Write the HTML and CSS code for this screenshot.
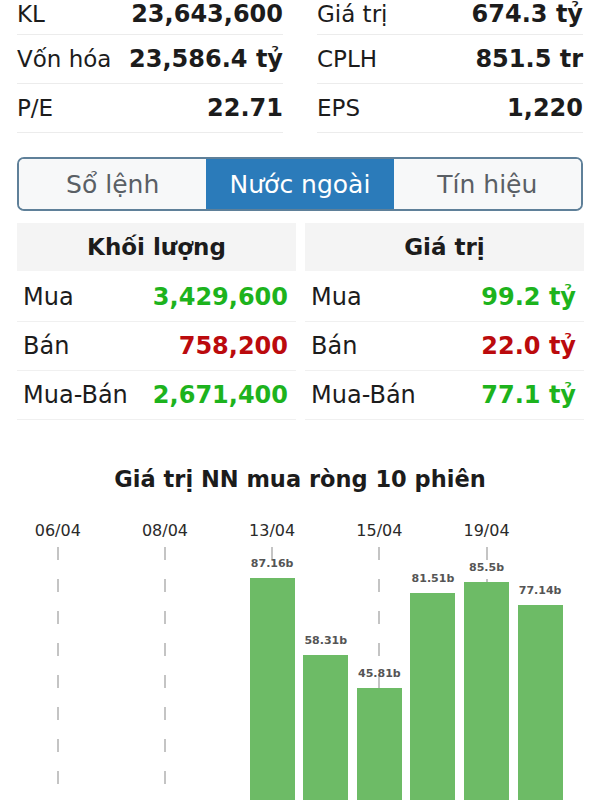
FILE: index.html
```html
<!DOCTYPE html>
<html lang="vi">
<head>
    <meta charset="UTF-8">
    <meta name="viewport" content="width=device-width, initial-scale=1.0">
    <title>Nước ngoài</title>
    <link rel="stylesheet" href="styles.css">
</head>
<body>
    <div class="stats">
        <div class="stat-col">
            <div class="stat-row"><span class="stat-label">KL</span><span class="stat-value">23,643,600</span></div>
            <div class="stat-row"><span class="stat-label">Vốn hóa</span><span class="stat-value">23,586.4 tỷ</span></div>
            <div class="stat-row"><span class="stat-label">P/E</span><span class="stat-value">22.71</span></div>
        </div>
        <div class="stat-col">
            <div class="stat-row"><span class="stat-label">Giá trị</span><span class="stat-value">674.3 tỷ</span></div>
            <div class="stat-row"><span class="stat-label">CPLH</span><span class="stat-value">851.5 tr</span></div>
            <div class="stat-row"><span class="stat-label">EPS</span><span class="stat-value">1,220</span></div>
        </div>
    </div>

    <div class="tabs">
        <div class="tab">Sổ lệnh</div>
        <div class="tab active">Nước ngoài</div>
        <div class="tab">Tín hiệu</div>
    </div>

    <div class="foreign">
        <div class="foreign-col">
            <div class="foreign-head">Khối lượng</div>
            <div class="foreign-row"><span>Mua</span><span class="num up">3,429,600</span></div>
            <div class="foreign-row"><span>Bán</span><span class="num down">758,200</span></div>
            <div class="foreign-row"><span>Mua-Bán</span><span class="num up">2,671,400</span></div>
        </div>
        <div class="foreign-col">
            <div class="foreign-head">Giá trị</div>
            <div class="foreign-row"><span>Mua</span><span class="num up">99.2 tỷ</span></div>
            <div class="foreign-row"><span>Bán</span><span class="num down">22.0 tỷ</span></div>
            <div class="foreign-row"><span>Mua-Bán</span><span class="num up">77.1 tỷ</span></div>
        </div>
    </div>

    <h2 class="chart-title">Giá trị NN mua ròng 10 phiên</h2>
    <div class="chart">
        <div class="slot tick"><div class="date">06/04</div><div class="plot"></div></div>
        <div class="slot"><div class="date"></div><div class="plot"></div></div>
        <div class="slot tick"><div class="date">08/04</div><div class="plot"></div></div>
        <div class="slot"><div class="date"></div><div class="plot"></div></div>
        <div class="slot tick">
            <div class="date">13/04</div>
            <div class="plot"><div class="bar-col"><span class="bar-val">87.16b</span><div class="bar" style="height: 232px"></div></div></div>
        </div>
        <div class="slot">
            <div class="date"></div>
            <div class="plot"><div class="bar-col"><span class="bar-val">58.31b</span><div class="bar" style="height: 155px"></div></div></div>
        </div>
        <div class="slot tick">
            <div class="date">15/04</div>
            <div class="plot"><div class="bar-col"><span class="bar-val">45.81b</span><div class="bar" style="height: 122px"></div></div></div>
        </div>
        <div class="slot">
            <div class="date"></div>
            <div class="plot"><div class="bar-col"><span class="bar-val">81.51b</span><div class="bar" style="height: 217px"></div></div></div>
        </div>
        <div class="slot tick">
            <div class="date">19/04</div>
            <div class="plot"><div class="bar-col"><span class="bar-val">85.5b</span><div class="bar" style="height: 228px"></div></div></div>
        </div>
        <div class="slot">
            <div class="date"></div>
            <div class="plot"><div class="bar-col"><span class="bar-val">77.14b</span><div class="bar" style="height: 205px"></div></div></div>
        </div>
    </div>
</body>
</html>
```

FILE: styles.css
```css
* {
    box-sizing: border-box;
    margin: 0;
    padding: 0;
}

html, body {
    overflow: hidden;
}

body {
    font-family: 'DejaVu Sans', Verdana, sans-serif;
    background-color: #fff;
    color: #1c1c1c;
}

/* top summary */
.stats {
    display: grid;
    grid-template-columns: 1fr 1fr;
    gap: 34px;
    padding: 0 17px;
}

.stat-row {
    display: flex;
    justify-content: space-between;
    align-items: center;
    height: 49px;
    line-height: 24px;
    border-bottom: 1px solid #ececec;
}

/* first row is partly scrolled off the top */
.stat-row:first-child {
    height: 35px;
    padding-top: 2px;
    align-items: flex-start;
}

.stat-label {
    font-size: 23px;
}

.stat-value {
    font-size: 24px;
    font-weight: bold;
}

/* segmented tabs */
.tabs {
    display: grid;
    grid-template-columns: 1fr 1fr 1fr;
    margin: 24px 17px 0;
    height: 54px;
    border: 2px solid #5f8099;
    border-radius: 7px;
    overflow: hidden;
}

.tab {
    display: flex;
    align-items: center;
    justify-content: center;
    font-size: 25px;
    color: #5a5f65;
    background-color: #f7f8f9;
}

.tab.active {
    background-color: #2b7bba;
    color: #fff;
}

/* foreign trading table */
.foreign {
    display: grid;
    grid-template-columns: 1fr 1fr;
    gap: 9px;
    padding: 0 16px 0 17px;
    margin-top: 12px;
}

.foreign-head {
    height: 48px;
    display: flex;
    align-items: center;
    justify-content: center;
    background-color: #f4f4f4;
    font-size: 23px;
    font-weight: bold;
    margin-bottom: 2px;
}

.foreign-row {
    display: flex;
    justify-content: space-between;
    align-items: center;
    height: 49px;
    padding: 0 8px 0 6px;
    border-bottom: 1px solid #f0f0f0;
    font-size: 24px;
}

.num {
    font-weight: bold;
}

.up {
    color: #1db31d;
}

.down {
    color: #bb0a0d;
}

/* chart */
.chart-title {
    margin-top: 46px;
    text-align: center;
    font-size: 22.5px;
    line-height: 27px;
    font-weight: bold;
    color: #1c1c1c;
}

.chart {
    display: flex;
    margin: 28px 33px 0 31px;
    height: 289px;
}

.slot {
    flex: 1;
    display: flex;
    flex-direction: column;
    align-items: center;
}

.date {
    height: 19px;
    font-size: 16px;
    line-height: 19px;
    color: #2a2a2a;
}

.plot {
    flex: 1;
    width: 100%;
    position: relative;
    display: flex;
    flex-direction: column;
    justify-content: flex-end;
    align-items: center;
}

.tick .plot::before {
    content: '';
    position: absolute;
    top: 7px;
    bottom: 0;
    left: 50%;
    width: 2px;
    margin-left: -1px;
    background: repeating-linear-gradient(to bottom, #c4c4c4 0 13px, transparent 13px 32px);
}

.bar-col {
    position: relative;
    display: flex;
    flex-direction: column;
    align-items: center;
}

.bar-val {
    font-size: 11px;
    line-height: 13px;
    font-weight: bold;
    color: #555;
    margin-bottom: 8px;
}

.bar {
    width: 45px;
    background-color: #6dbb66;
}
```
